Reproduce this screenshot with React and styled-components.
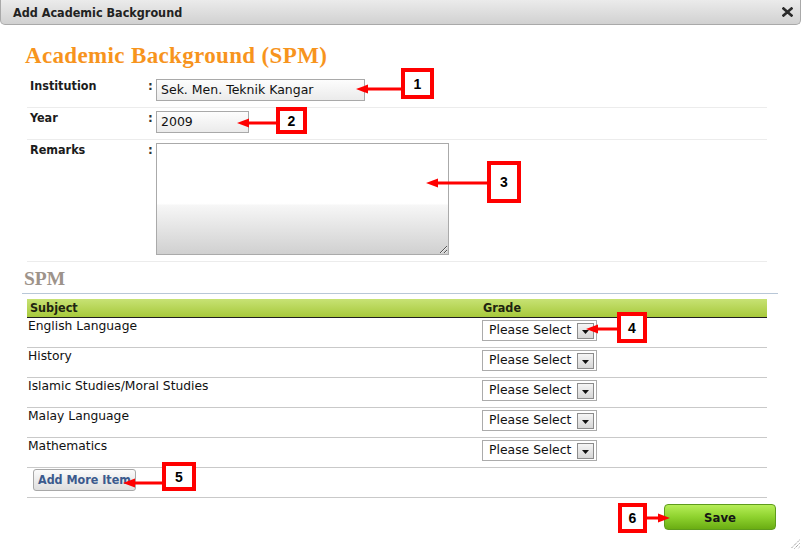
import styled, { createGlobalStyle } from 'styled-components';

const GlobalStyle = createGlobalStyle`
  html, body { margin: 0; padding: 0; background: #fff; }
  body { font-family: 'DejaVu Sans', Verdana, sans-serif; color: #111; }
`;

const SUBJECTS = [
  'English Language',
  'History',
  'Islamic Studies/Moral Studies',
  'Malay Language',
  'Mathematics',
];

// red callouts drawn over the form
const CALLOUTS = [
  { n: '1', x: 401, y: 68, w: 33, h: 31, arrow: { y: 89, from: 401, to: 356 } },
  { n: '2', x: 276, y: 107, w: 31, h: 27, arrow: { y: 123, from: 276, to: 237 } },
  { n: '3', x: 487, y: 161, w: 34, h: 42, arrow: { y: 183, from: 487, to: 426 } },
  { n: '4', x: 617, y: 312, w: 30, h: 31, arrow: { y: 329, from: 617, to: 586 } },
  { n: '5', x: 162, y: 462, w: 34, h: 29, arrow: { y: 483, from: 162, to: 123 } },
  { n: '6', x: 618, y: 503, w: 29, h: 30, arrow: { y: 518, from: 647, to: 670 } },
];

const Arrow = ({ from, to, y }) => {
  const left = Math.min(from, to);
  const len = Math.abs(from - to);
  const right = to > from;
  return (
    <ArrowSvg $x={left} $y={y - 5} width={len} height={10} viewBox={`0 0 ${len} 10`}>
      {right ? (
        <>
          <rect x={0} y={3.5} width={len - 10} height={3} fill="#f00" />
          <polygon points={`${len},5 ${len - 12},0.5 ${len - 12},9.5`} fill="#f00" />
        </>
      ) : (
        <>
          <rect x={10} y={3.5} width={len - 10} height={3} fill="#f00" />
          <polygon points="0,5 12,0.5 12,9.5" fill="#f00" />
        </>
      )}
    </ArrowSvg>
  );
};

const App = () => {
  return (
    <Window>
      <GlobalStyle />
      <TitleBar>
        <Title>Add Academic Background</Title>
        <svg width="11" height="10" viewBox="0 0 11 10">
          <path d="M1.5 1.5 L9.5 8.5 M9.5 1.5 L1.5 8.5" stroke="#2b2b2b" strokeWidth="2.6" strokeLinecap="square" />
        </svg>
      </TitleBar>
      <Content>
        <Heading>Academic Background (SPM)</Heading>
        <div>
          <FieldRow>
            <Label>Institution</Label>
            <Colon>:</Colon>
            <TextInput $w={209} defaultValue="Sek. Men. Teknik Kangar" />
          </FieldRow>
          <FieldRow>
            <Label>Year</Label>
            <Colon>:</Colon>
            <TextInput $w={93} defaultValue="2009" />
          </FieldRow>
          <FieldRow>
            <Label>Remarks</Label>
            <Colon>:</Colon>
            <Remarks defaultValue="" />
          </FieldRow>
        </div>
        <SectionTitle>SPM</SectionTitle>
        <Grid>
          <HeadRow>
            <span>Subject</span>
            <span>Grade</span>
          </HeadRow>
          {SUBJECTS.map((s) => (
            <Row key={s}>
              <Cell>{s}</Cell>
              <Cell>
                <SelectBox>
                  Please Select
                  <DropBtn>
                    <svg width="7" height="4" viewBox="0 0 7 4">
                      <polygon points="0,0 7,0 3.5,4" fill="#111" />
                    </svg>
                  </DropBtn>
                </SelectBox>
              </Cell>
            </Row>
          ))}
          <Row>
            <Cell>
              <AddButton>Add More Item</AddButton>
            </Cell>
          </Row>
        </Grid>
        <Footer>
          <SaveButton>Save</SaveButton>
        </Footer>
      </Content>

      {CALLOUTS.map((c) => (
        <div key={c.n}>
          <Marker $x={c.x} $y={c.y} $w={c.w} $h={c.h}>{c.n}</Marker>
          <Arrow {...c.arrow} />
        </div>
      ))}

      <Grip width="10" height="10" viewBox="0 0 10 10">
        <path d="M9.5 1 L1 9.5 M9.5 4.5 L4.5 9.5 M9.5 8 L8 9.5" stroke="#777" strokeWidth="1" strokeDasharray="1 1" />
      </Grip>
    </Window>
  );
};

export default App;

const Window = styled.div`
  position: relative;
  width: 801px;
  height: 550px;
  overflow: hidden;
  background: #fff;
`
const TitleBar = styled.div`
  box-sizing: border-box;
  height: 25px;
  display: flex;
  align-items: center;
  justify-content: space-between;
  padding: 0 7px 0 12px;
  background: linear-gradient(#ebebeb, #d1d1d1);
  border: 1px solid #a9a9a9;
  border-top: 0;
  border-radius: 0 0 5px 5px;
`
const Title = styled.div`
  font-family: 'DejaVu Sans Condensed', 'DejaVu Sans', sans-serif;
  font-weight: 700;
  font-size: 12.5px;
  color: #222;
`
const Content = styled.div`
  padding: 0 34px 0 27px;
`
const Heading = styled.h1`
  margin: 18px 0 7px -2px;
  font-family: 'Liberation Serif', serif;
  font-weight: 700;
  font-size: 23px;
  line-height: 26px;
  letter-spacing: 0.35px;
  color: #f7941d;
`
const FieldRow = styled.div`
  display: grid;
  grid-template-columns: 118px 8px auto;
  align-items: start;
  padding: 3px 0 6px 3px;
  border-bottom: 1px solid #ececec;
`
const Label = styled.div`
  margin-top: -1px;
  font-family: 'DejaVu Sans Condensed', 'DejaVu Sans', sans-serif;
  font-weight: 700;
  font-size: 12.5px;
  line-height: 15px;
  color: #1c1c1c;
`
const Colon = styled.div`
  font-size: 12px;
  line-height: 15px;
  font-weight: 700;
  color: #333;
`
const TextInput = styled.input`
  box-sizing: border-box;
  width: ${(p) => p.$w}px;
  height: 22px;
  margin: 0;
  padding: 0 4px 1px;
  border: 1px solid #a9a9a9;
  background: linear-gradient(#fdfdfd, #ebebeb);
  font-family: 'DejaVu Sans', Verdana, sans-serif;
  font-size: 12.5px;
  color: #111;
  outline: none;
`
const Remarks = styled.textarea`
  box-sizing: border-box;
  width: 293px;
  height: 112px;
  margin: 0;
  border: 1px solid #aaa;
  resize: both;
  background: linear-gradient(#fff 0%, #fff 54%, #f6f6f6 56%, #d0d0d0 100%);
  font-family: 'DejaVu Sans', sans-serif;
  font-size: 12px;
  outline: none;
`
const SectionTitle = styled.h2`
  margin: 6px -11px 0 -5px;
  padding: 0 0 3px 2px;
  font-family: 'Liberation Serif', serif;
  font-weight: 700;
  font-size: 19.5px;
  line-height: 22px;
  color: #9d938a;
  border-bottom: 1px solid #b8c7d7;
`
const Grid = styled.div`
  margin-top: 5px;
`
const HeadRow = styled.div`
  display: grid;
  grid-template-columns: 453px 1fr;
  height: 18px;
  line-height: 18px;
  background: linear-gradient(#c7e274, #a7c93b);
  border-bottom: 1px solid #1e1e1e;
  font-family: 'DejaVu Sans Condensed', 'DejaVu Sans', sans-serif;
  font-weight: 700;
  font-size: 12.5px;
  color: #1e2410;
  span { padding-left: 3px; }
`
const Row = styled.div`
  box-sizing: border-box;
  display: grid;
  grid-template-columns: 453px 1fr;
  height: 30px;
  border-bottom: 1px solid #c9c9c9;
`
const Cell = styled.div`
  padding: 1px 2px 0 1px;
  font-size: 12.3px;
  line-height: 15px;
  color: #111;
  &:first-child { padding-left: 1px; }
  &:last-child { padding-left: 2px; }
`
const SelectBox = styled.div`
  box-sizing: border-box;
  display: flex;
  align-items: center;
  justify-content: space-between;
  width: 115px;
  height: 21px;
  margin-top: 1px;
  padding: 0 2px 2px 6px;
  border: 1px solid #ababab;
  background: #fff;
  font-size: 12.4px;
  color: #111;
`
const DropBtn = styled.div`
  box-sizing: border-box;
  display: flex;
  align-items: center;
  justify-content: center;
  width: 17px;
  height: 16px;
  margin-top: 2px;
  padding-top: 2px;
  border: 1px solid #8c8c8c;
  background: linear-gradient(#f5f5f5, #d6d6d6);
`
const AddButton = styled.button`
  box-sizing: border-box;
  height: 22px;
  margin: 0 0 0 4px;
  padding: 0 4px 2px;
  border: 1px solid #a8a8a8;
  border-radius: 3px;
  background: linear-gradient(#fbfbfb, #dedede);
  font-family: 'DejaVu Sans Condensed', 'DejaVu Sans', sans-serif;
  font-weight: 700;
  font-size: 12.4px;
  color: #3b5a8d;
`
const Footer = styled.div`
  display: flex;
  justify-content: flex-end;
  margin: 6px -9px 0 0;
`
const SaveButton = styled.button`
  box-sizing: border-box;
  width: 112px;
  height: 26px;
  border: 1px solid #5e9c1c;
  border-radius: 4px;
  background: linear-gradient(#b6ee58, #8ed22e 50%, #6aad13);
  font-family: 'DejaVu Sans Condensed', 'DejaVu Sans', sans-serif;
  font-weight: 700;
  font-size: 13px;
  color: #151515;
`
const Marker = styled.div`
  position: absolute;
  left: ${(p) => p.$x}px;
  top: ${(p) => p.$y}px;
  width: ${(p) => p.$w}px;
  height: ${(p) => p.$h}px;
  box-sizing: border-box;
  display: flex;
  align-items: center;
  justify-content: center;
  border: 4px solid #f00;
  background: #fff;
  font-family: 'Liberation Sans', Arial, sans-serif;
  font-weight: 700;
  font-size: 14px;
  color: #000;
`
const ArrowSvg = styled.svg`
  position: absolute;
  left: ${(p) => p.$x}px;
  top: ${(p) => p.$y}px;
`
const Grip = styled.svg`
  position: absolute;
  right: 1px;
  bottom: 1px;
`
